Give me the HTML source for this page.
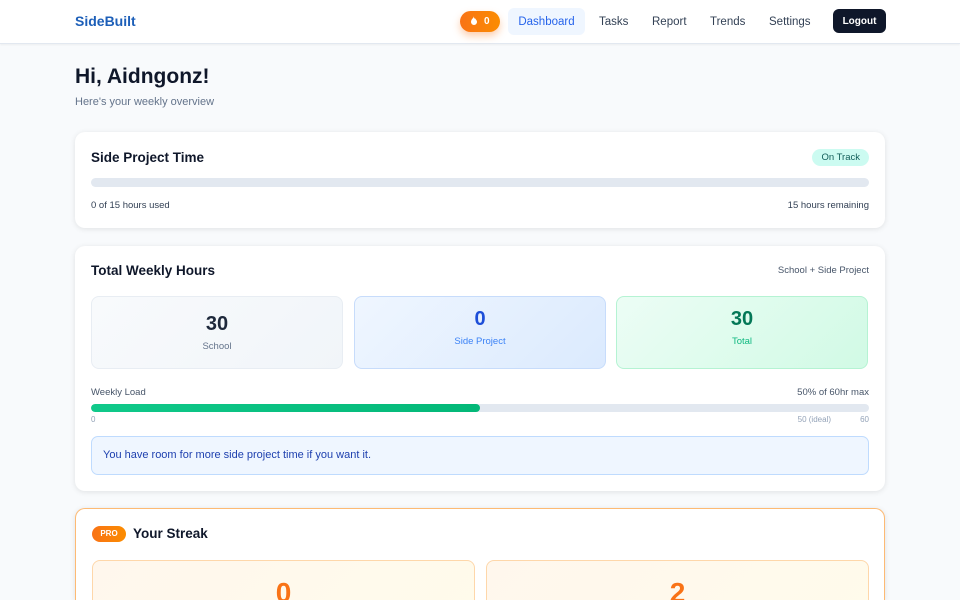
<!DOCTYPE html>
<html><head><style>
*{box-sizing:border-box;margin:0;padding:0}
html,body{width:960px;height:600px;overflow:hidden}
body{background:#f8fafc;font-family:"Liberation Sans",sans-serif;color:#0f172a;position:relative}
.nav{height:44px;background:#fff;border-bottom:1px solid #e2e8f0;box-shadow:0 1px 2px rgba(0,0,0,.05);position:relative}
.logo{position:absolute;left:75px;top:13px;font-weight:bold;font-size:14px;color:#1d5fb8}
.fire{position:absolute;left:460px;top:11px;width:40px;height:21px;border-radius:11px;background:linear-gradient(90deg,#f97316,#fb8c00);color:#fff;font-size:10px;font-weight:bold;line-height:21px;text-align:center;box-shadow:0 4px 8px rgba(249,115,22,.35)}
.lnk{position:absolute;top:8px;height:27px;line-height:28px;font-size:11.5px;color:#334155}
.dash{left:508px;width:77px;text-align:center;background:#eff6ff;border-radius:6px;color:#2563eb}
.out{position:absolute;left:833px;top:9px;width:53px;height:24px;background:#0f172a;border-radius:6px;color:#fff;font-size:10px;font-weight:bold;text-align:center;line-height:25px}
h1{position:absolute;left:75px;top:65px;font-size:21px;font-weight:bold}
.sub{position:absolute;left:75px;top:96px;font-size:11px;color:#64748b}
.card{position:absolute;left:75px;width:810px;background:#fff;border-radius:10px;box-shadow:0 1px 6px rgba(0,0,0,.1)}
.t{position:absolute;left:16px;font-size:13.5px;font-weight:bold}
.s{position:absolute;font-size:9.5px;color:#334155}
.bar{position:absolute;left:16px;width:778px;height:9px;border-radius:5px;background:#e2e8f0;overflow:hidden}
.box{position:absolute;top:50px;width:252px;height:73px;border-radius:8px;text-align:center}
.box b{display:block;font-size:20px}
.box span{font-size:9.5px}
</style></head><body>
<div class="nav">
<div class="logo">SideBuilt</div>
<div class="fire"><svg width="8" height="9" viewBox="0 0 8 9" style="vertical-align:-1px"><path d="M4 0C4 2 1 3 1 6a3 3 0 006 0C7 4 5 3 5 2 4.5 3 4 3 4 0z" fill="#fff"/></svg>&nbsp; 0</div>
<div class="lnk dash">Dashboard</div>
<div class="lnk" style="left:599px">Tasks</div>
<div class="lnk" style="left:652px">Report</div>
<div class="lnk" style="left:710px">Trends</div>
<div class="lnk" style="left:769px">Settings</div>
<div class="out">Logout</div>
</div>
<h1>Hi, Aidngonz!</h1>
<div class="sub">Here's your weekly overview</div>
<div class="card" style="top:132px;height:96px">
<div class="t" style="top:18px">Side Project Time</div>
<div style="position:absolute;right:16px;top:17px;background:#ccfbf1;color:#115e59;font-size:9.5px;padding:3px 9px;border-radius:9px">On Track</div>
<div class="bar" style="top:46px"></div>
<div class="s" style="left:16px;top:68px">0 of 15 hours used</div>
<div class="s" style="right:16px;top:68px">15 hours remaining</div>
</div>
<div class="card" style="top:246px;height:245px">
<div class="t" style="top:17px">Total Weekly Hours</div>
<div class="s" style="right:16px;top:19px;color:#475569">School + Side Project</div>
<div class="box" style="left:16px;background:linear-gradient(135deg,#f8fafc,#f1f5f9);border:1px solid #e8edf3;padding-top:16px"><b style="color:#1e293b">30</b><span style="color:#64748b">School</span></div>
<div class="box" style="left:279px;background:linear-gradient(135deg,#eff6ff,#dbeafe);border:1px solid #c7dcfb;padding-top:11px"><b style="color:#1d4ed8">0</b><span style="color:#3b82f6">Side Project</span></div>
<div class="box" style="left:541px;background:linear-gradient(135deg,#ecfdf5,#d1fae5);border:1px solid #b5f3d3;padding-top:11px"><b style="color:#047857">30</b><span style="color:#10b981">Total</span></div>
<div class="s" style="left:16px;top:141px;color:#475569">Weekly Load</div>
<div class="s" style="right:16px;top:141px;color:#475569">50% of 60hr max</div>
<div class="bar" style="top:158px;height:8px"><div style="width:50%;height:100%;background:linear-gradient(90deg,#10c98a,#03b878);border-radius:5px"></div></div>
<div class="s" style="left:16px;top:169px;font-size:8px;color:#94a3b8">0</div>
<div class="s" style="right:54px;top:169px;font-size:8px;color:#94a3b8">50 (ideal)</div>
<div class="s" style="right:16px;top:169px;font-size:8px;color:#94a3b8">60</div>
<div style="position:absolute;left:16px;top:190px;width:778px;height:39px;background:#eff6ff;border:1px solid #bfdbfe;border-radius:7px;color:#1e40af;font-size:11px;line-height:37px;padding-left:11px">You have room for more side project time if you want it.</div>
</div>
<div class="card" style="top:508px;height:92px;border:1.5px solid #fdba74;border-bottom:none;border-radius:10px 10px 0 0;overflow:hidden">
<div style="position:absolute;left:16px;top:17px;width:34px;height:16px;border-radius:8px;background:linear-gradient(90deg,#f97316,#fb8c00);color:#fff;font-size:8px;font-weight:bold;text-align:center;line-height:16px">PRO</div>
<div class="t" style="left:57px;top:17px">Your Streak</div>
<div style="position:absolute;left:16px;top:51px;width:383px;height:60px;border-radius:8px;background:linear-gradient(135deg,#fff7ed,#fffbeb);border:1px solid #fed7aa;text-align:center;padding-top:16px;font-size:28px;font-weight:bold;color:#f97316">0</div>
<div style="position:absolute;left:410px;top:51px;width:383px;height:60px;border-radius:8px;background:linear-gradient(135deg,#fff7ed,#fffbeb);border:1px solid #fed7aa;text-align:center;padding-top:16px;font-size:28px;font-weight:bold;color:#f97316">2</div>
</div>
</body></html>
